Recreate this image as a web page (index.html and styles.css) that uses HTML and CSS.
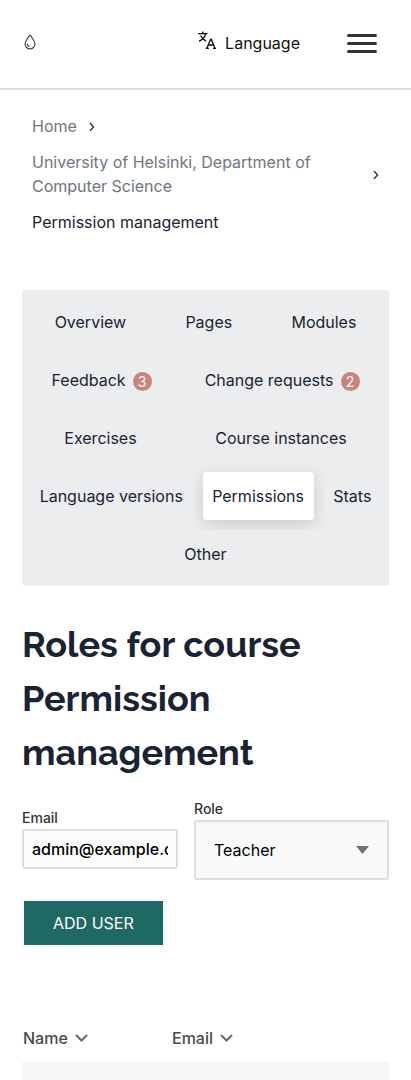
FILE: index.html
```html
<!DOCTYPE html>
<html lang="en">
<head>
<meta charset="utf-8">
<meta name="viewport" content="width=device-width, initial-scale=1">
<title>Permission management</title>
<link rel="stylesheet" href="styles.css">
</head>
<body>
<header class="topbar">
  <a class="logo" href="#" aria-label="Home page">
    <svg width="12" height="16" viewBox="0 0 12 16" fill="none" stroke="#3b4757" stroke-width="1.2" stroke-linecap="round"><path d="M6 1C4.3 3.2 1.1 6.600 1.100 10A4.900 4.900 0 0 0 10.900 10C10.900 6.600 7.700 3.200 6 1Z"/><path d="M3.300 10.200C3.400 11.500 4.200 12.200 5.200 12.400"/></svg>
  </a>
  <button class="language" type="button">
    <svg width="18" height="18" viewBox="0 0 18 18" fill="none" stroke="#111" stroke-width="1.300"><path d="M0 2.700H9.500M4.800 .5V2.700M7.500 3C6.800 6.200 4.200 8.800 1 10.300M2.600 4.600C3.600 7 5.600 9 8 10.200M8.800 17.200L12.700 8.200H13.200L17 17.200M10.200 14H15.600M7.800 17.300H10.800M15 17.300H18"/></svg>
    <span>Language</span>
  </button>
  <button class="burger" type="button" aria-label="Open menu"><span></span><span></span><span></span></button>
</header>

<nav class="crumbs" aria-label="Breadcrumbs">
  <ol>
    <li><a href="#">Home</a><svg width="6" height="9" viewBox="0 0 6 9" fill="none" stroke="#333" stroke-width="1.400"><path d="M1 1L4.500 5L1 9"/></svg></li>
    <li><a href="#">University of Helsinki, Department of Computer Science</a><svg width="6" height="9" viewBox="0 0 6 9" fill="none" stroke="#333" stroke-width="1.400"><path d="M1 1L4.500 5L1 9"/></svg></li>
    <li><span>Permission management</span></li>
  </ol>
</nav>

<main class="content">
  <nav class="tabs" aria-label="Course">
    <a href="#">Overview</a>
    <a href="#">Pages</a>
    <a href="#">Modules</a>
    <a href="#">Feedback <span class="badge">3</span></a>
    <a href="#">Change requests <span class="badge">2</span></a>
    <a href="#">Exercises</a>
    <a href="#">Course instances</a>
    <a href="#">Language versions</a>
    <a href="#" class="active" aria-current="page">Permissions</a>
    <a href="#">Stats</a>
    <a href="#">Other</a>
  </nav>

  <h1>Roles for course Permission management</h1>

  <form class="role-form">
    <div class="fields">
      <div class="field">
        <label for="email">Email</label>
        <input id="email" type="text" value="admin@example.com">
      </div>
      <div class="field">
        <label for="role">Role</label>
        <div class="select">
          <select id="role"><option>Teacher</option><option>Admin</option><option>Assistant</option></select>
          <svg width="13" height="8" viewBox="0 0 13 8" fill="#6d7482"><path d="M0 0H13L6.500 8Z"/></svg>
        </div>
      </div>
    </div>
    <button class="submit" type="button">ADD USER</button>
  </form>

  <table class="roles">
    <thead>
      <tr>
        <th><button type="button">Name <svg width="13" height="8" viewBox="0 0 13 8" fill="none" stroke="#686868" stroke-width="2" stroke-linecap="round"><path d="M1.500 1.500L6.500 6.500L11.500 1.500"/></svg></button></th>
        <th><button type="button">Email <svg width="13" height="8" viewBox="0 0 13 8" fill="none" stroke="#686868" stroke-width="2" stroke-linecap="round"><path d="M1.500 1.500L6.500 6.500L11.500 1.500"/></svg></button></th>
      </tr>
    </thead>
    <tbody><tr><td></td><td></td></tr></tbody>
  </table>
</main>
</body>
</html>
```
FILE: styles.css
```css
* { box-sizing: border-box; }

body {
  margin: 0;
  background: #fff;
  color: #1a2333;
  font: 16px/24px Inter, "Noto Sans", sans-serif;
}

a { color: inherit; text-decoration: none; }

button {
  padding: 0;
  border: 0;
  background: none;
  color: inherit;
  font: inherit;
  cursor: pointer;
}

svg { flex: none; display: block; }

.topbar {
  display: flex;
  align-items: center;
  height: 90px;
  padding: 0 34px 2px 24px;
  border-bottom: 2px solid #dcdcdc;
}

.logo { padding-bottom: 3px; }

.language {
  display: flex;
  align-items: center;
  gap: 9px;
  margin-left: auto;
  color: #111;
}

.language svg { margin-bottom: 6px; }

.burger {
  display: flex;
  flex-direction: column;
  gap: 5px;
  width: 30px;
  margin-left: 47px;
}

.burger span {
  height: 3px;
  border-radius: 2px;
  background: #333;
}

.crumbs { padding: 24px 32px 56px; }

.crumbs ol {
  display: flex;
  flex-direction: column;
  gap: 12px;
  margin: 0;
  padding: 0;
  list-style: none;
}

.crumbs li {
  display: flex;
  align-items: center;
  gap: 12px;
}

.crumbs a { color: #6f7680; }

.content { padding: 0 22px; }

.tabs {
  display: flex;
  flex-wrap: wrap;
  gap: 10px;
  padding: 8px;
  border-radius: 4px;
  background: #ebedee;
}

.tabs a {
  display: flex;
  flex: 1 0 auto;
  align-items: center;
  justify-content: center;
  gap: 7px;
  height: 48px;
  padding: 0 9px;
  border-radius: 4px;
  background: #ebedee;
}

.tabs .active {
  background: #fff;
  box-shadow: 0 4px 16px rgba(0, 0, 0, 0.15);
}

.badge {
  width: 19px;
  height: 19px;
  margin-top: 2px;
  border-radius: 50%;
  background: #c78578;
  color: #fff;
  font-size: 14px;
  line-height: 19px;
  text-align: center;
}

h1 {
  margin: 31px 0 21px;
  font: 700 36px/54px Raleway, Lato, sans-serif;
}

.fields {
  display: grid;
  grid-template-columns: 4fr 5fr;
  align-items: center;
  gap: 16px;
}

.field { min-width: 0; }

.field label {
  display: block;
  margin-bottom: 2px;
  color: #333;
  font-size: 14px;
  font-weight: 500;
  line-height: 18px;
}

.field input {
  display: block;
  width: 100%;
  height: 40px;
  margin: 0 0 2px;
  padding: 0 8px;
  border: 2px solid #dedede;
  border-radius: 3px;
  background: #fcfcfc;
  color: #000;
  font: 500 16px/24px Inter, sans-serif;
}

.select { position: relative; }

.select select {
  display: block;
  width: 100%;
  height: 60px;
  padding: 0 40px 0 18px;
  border: 2px solid #dedede;
  border-radius: 3px;
  background: #f9f9f9;
  color: #000;
  font: inherit;
  appearance: none;
}

.select svg {
  position: absolute;
  top: 26px;
  right: 20px;
  pointer-events: none;
}

.submit {
  height: 48px;
  margin-top: 19px;
  padding: 0 29px;
  border: 2px solid #f5f6f7;
  background: #1f6964;
  color: #fff;
}

.roles {
  width: 100%;
  margin-top: 67px;
  border-collapse: collapse;
  table-layout: fixed;
}

.roles th {
  height: 48px;
  padding: 0 1px;
  color: #4a4a4a;
  font-weight: 500;
  text-align: left;
}

.roles th:first-child { width: 149px; }

.roles th button {
  display: flex;
  align-items: center;
  gap: 7px;
}

.roles td {
  height: 18px;
  padding: 0;
  background: #f5f6f7;
}
```
